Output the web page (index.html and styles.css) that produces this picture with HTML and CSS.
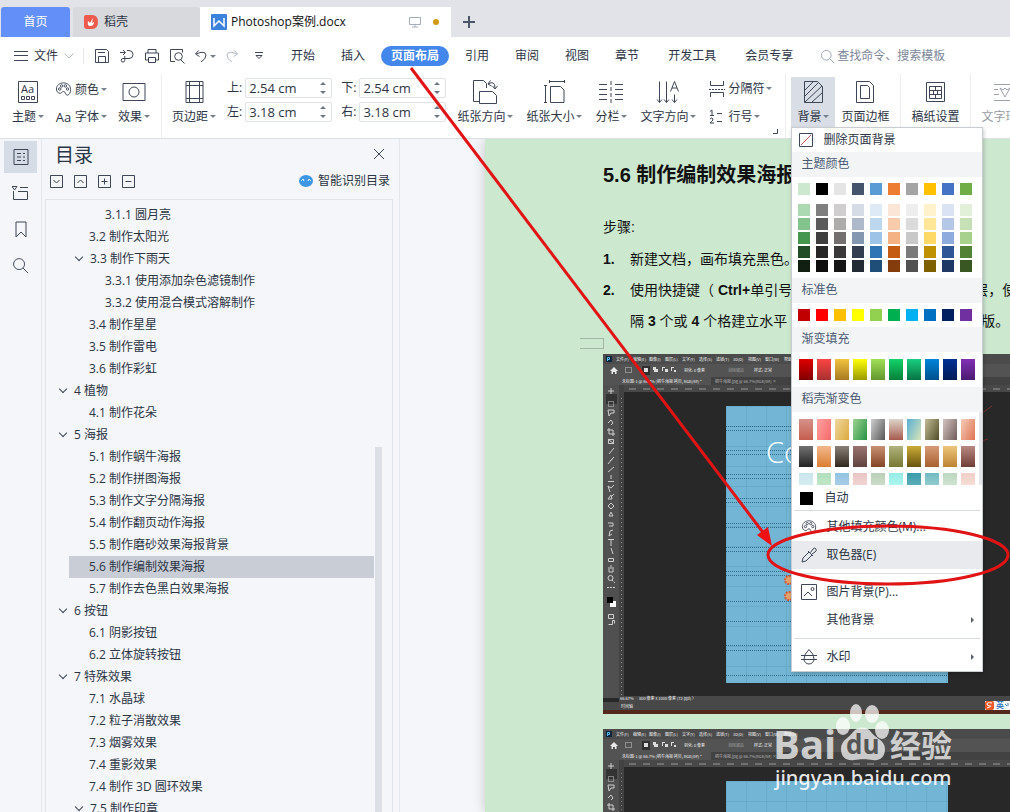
FILE: index.html
```html
<!DOCTYPE html>
<html lang="zh-CN">
<head>
<meta charset="utf-8">
<title>Photoshop案例.docx</title>
<link rel="stylesheet" href="styles.css">
</head>
<body>
<svg class="defs" aria-hidden="true">
  <symbol id="palette" viewBox="0 0 18 18"><path d="M9 2C4.500 2 1.500 5 1.500 8.500c0 3 2 4.500 4 4.500 2 0 1.500-2 3.500-2 2.500 0 1.500 4 4 4 2 0 3.500-2.500 3.500-6C16.500 5 13.500 2 9 2z"/><circle cx="5" cy="8.500" r="1.300"/><circle cx="7" cy="5.200" r="1.300"/><circle cx="11" cy="5.200" r="1.300"/><circle cx="13.300" cy="8.500" r="1.300"/></symbol>
  <symbol id="lens" viewBox="0 0 18 18"><circle cx="7.500" cy="7.500" r="5.800"/><path d="M11.700 11.700L17 17"/></symbol>
  <symbol id="pstools" viewBox="0 0 16 240">
    <g fill="none" stroke="#cfcfcf">
    <path d="M8 2v6M5 5h6"/><path d="M5.500 15.500h5v5h-5z" stroke-dasharray="1 1"/><path d="M5 24h6v3H8l-2 3zM5 37l3-3 2 3-2 2M6 42v6h6M4 44h6v6M5.500 53.500h5v4h-5zM5 53l6 5M11 62l-5 6M11 71l-4 4M10 72l-5 6M11 81l-6 5M8 89v4M5 95.500h6M11 99l-3 3-3-2 2 6M11 108l-3 3M8 109l-3 4h4zM5 120l3-3 3 3-3 3zM8 126l-2 4h4zM5 137h5v3H6M10 144l-3 1-1 5 3-2M5 153.500h6M8 153v7M8 162l2 6M5.500 172.500h5v3h-5zM6 181v5h4v-5M8 179v4"/><circle cx="7.500" cy="192" r="2.500"/><path d="M9 194l3 3M4 201.500h8" stroke-dasharray="2 1"/>
    <path d="M5.500 228.500h5v4h-5zM5.500 238.500h4v-4h2v3"/></g>
    <path d="M7 215h6v6H7z" fill="#fff"/><path d="M4 211h6v6H4z" fill="#000"/>
  </symbol>
</svg>

<div class="app">
  <header class="tabs">
    <button class="tab home">首页</button>
    <button class="tab docer"><svg width="14" height="14" viewBox="0 0 14 14"><path d="M2 0h6q6 0 6 7t-6 7H3q-3 0-3-3V2q0-2 2-2z" fill="#ed5b4d"/><path d="M4 6q-1 5 2 5 4 0 4-4l-2 1 1-5-3 5z" fill="#fff"/></svg>稻壳</button>
    <button class="tab doc"><svg width="16" height="16" viewBox="0 0 16 16"><rect width="16" height="16" rx="1" fill="#3b82dc"/><path d="M3 4v8l5-5 5 5V4" fill="none" stroke="#fff" stroke-width="1.500"/></svg><span>Photoshop案例.docx</span>
      <svg class="screen" width="12" height="12" viewBox="0 0 12 12"><path d="M.5 1.500h11v7H.5zM6 8.500v2M3 11h6" fill="none" stroke="#a3acb9"/></svg><i class="dot"></i></button>
    <button class="add" aria-label="新建"><svg width="12" height="12" viewBox="0 0 12 12"><path d="M6 0v12M0 6h12" stroke="#4b5668" stroke-width="2"/></svg></button>
  </header>

  <nav class="menubar">
    <button class="file"><svg class="ic" width="14" height="12" viewBox="0 0 14 12"><path d="M0 1.500h14M0 5.500h14M0 10.500h14"/></svg>文件<svg class="ic pale" width="10" height="6" viewBox="0 0 10 6"><path d="M.5.500L5 5l4.500-4.500"/></svg></button>
    <div class="quick">
      <button aria-label="保存"><svg class="ic" width="16" height="16" viewBox="0 0 16 16"><path d="M1.500 14.500v-13h11l2 2v11zM4.500 14V8.500h7V14M4 4.500h7"/></svg></button>
      <button aria-label="输出"><svg class="ic" width="16" height="16" viewBox="0 0 16 16"><path d="M1 4.500h5M4 2l2.500 2.500L4 7M8 2.500h2a4 4 0 0 1 0 8H4a1.800 1.800 0 1 0 1.800 1.800V8"/></svg></button>
      <button aria-label="打印"><svg class="ic" width="16" height="16" viewBox="0 0 16 16"><path d="M4 5V1.500h8V5M4 12H1.500V5h13v7H12M4.500 9.500h7v5h-7z"/></svg></button>
      <button aria-label="预览"><svg class="ic" width="16" height="16" viewBox="0 0 16 16"><path d="M6 13.500H1.500v-12h12v3M12 12l3.500 3.500"/><circle cx="9.500" cy="8.500" r="3.800"/></svg></button>
      <button aria-label="撤销" class="caret"><svg class="ic" width="14" height="14" viewBox="0 0 14 14"><path d="M4.500 1.500L1.500 5l4 2.500M2 5q9-4 10 1 0 4-5 7"/></svg></button>
      <button aria-label="重做"><svg class="ic pale" width="14" height="14" viewBox="0 0 14 14"><path d="M9.500 1.500L12.500 5l-4 2.500M12 5Q3 1 2 6q0 4 5 7"/></svg></button>
      <button aria-label="更多"><svg class="ic" width="10" height="8" viewBox="0 0 10 8"><path d="M1 .5h8M2 3.500l3 3 3-3z"/></svg></button>
    </div>
    <div class="menus"><a href="#">开始</a><a href="#">插入</a><a href="#" class="current">页面布局</a><a href="#">引用</a><a href="#">审阅</a><a href="#">视图</a><a href="#">章节</a><a href="#" class="wide">开发工具</a><a href="#" class="wide">会员专享</a></div>
    <label class="search"><svg class="ic" width="15" height="15"><use href="#lens"/></svg><input type="text" placeholder="查找命令、搜索模板" aria-label="查找命令"></label>
  </nav>

  <section class="ribbon">
    <div class="group first">
      <button class="tool"><svg class="ic" width="20" height="22" viewBox="0 0 20 22"><path d="M.5.500h19v21H.5zM3.500 15.500h3v3h-3zM8.500 15.500h3v3h-3zM13.500 15.500h3v3h-3z"/><text class="aa" x="3" y="12">Aa</text></svg><span class="caret">主题</span></button>
      <div class="pair"><button class="row"><svg class="ic" width="17" height="17"><use href="#palette"/></svg><span class="caret">颜色</span></button><button class="row"><b class="aa-label">Aa</b><span class="caret">字体</span></button></div>
      <button class="tool"><svg class="ic" width="24" height="20" viewBox="0 0 24 20"><path d="M1 1.500h22v17H1z"/><circle cx="12" cy="10" r="5"/></svg><span class="caret">效果</span></button>
    </div>
    <div class="group layout">
      <button class="tool"><svg class="ic" width="19" height="22" viewBox="0 0 19 22"><path d="M1 .5h17v21H1zM4.500 0v22M14.500 0v22M1 4.500h17M1 17.500h17"/></svg><span class="caret">页边距</span></button>
      <div class="margins">
        <label>上:<span class="spin"><input type="text" value="2.54 cm"><i></i></span></label><label>下:<span class="spin"><input type="text" value="2.54 cm"><i></i></span></label>
        <label>左:<span class="spin"><input type="text" value="3.18 cm"><i></i></span></label><label>右:<span class="spin"><input type="text" value="3.18 cm"><i></i></span></label>
      </div>
      <div class="page-tools">
        <button class="tool"><svg class="ic" width="26" height="24" viewBox="0 0 26 24"><path d="M7 21.500H1.500V.500h10l3 3V8M7.500 11.500h13l4 4v8h-17zM16 4q7-4 7 4M18.500.500L16 4l3.500 2M20.500 6L23 9l2.500-3"/></svg><span class="caret">纸张方向</span></button>
        <button class="tool"><svg class="ic" width="21" height="24" viewBox="0 0 21 24"><path d="M5 1.500h15M5.500 0v3M20.500 0v3M1.500 5v18M0 5.500h3M0 22.500h3M6.500 6.500h10l3.500 3.500v12.500H6.500z"/></svg><span class="caret">纸张大小</span></button>
        <button class="tool"><svg class="ic" width="24" height="22" viewBox="0 0 24 22"><path d="M0 3.500h8M0 8.500h8M0 13.500h8M0 18.500h8M16 3.500h8M16 8.500h8M16 13.500h8M16 18.500h8"/><path d="M12 0v22" stroke-dasharray="4 2"/></svg><span class="caret">分栏</span></button>
        <button class="tool"><svg class="ic" width="24" height="23" viewBox="0 0 24 23"><path d="M3.500 1v21M1 19l2.500 3L6 19M10.500 1v21M8 19l2.500 3 2.500-3M18.500 14v8M16 19l2.500 3 2.500-3M14.500 11l4-10 4 10M16 7.500h5"/></svg><span class="caret">文字方向</span></button>
        <div class="pair"><button class="row"><svg class="ic" width="16" height="16" viewBox="0 0 16 16"><path d="M1.500 0v4.500h13V0M1.500 16v-4.500h13V16"/><path d="M0 8.500h16" stroke-dasharray="2 1"/></svg><span class="caret">分隔符</span></button><button class="row"><svg class="ic" width="16" height="16" viewBox="0 0 16 16"><path d="M1 2.500L3 1v5M1 6.500h4M8 4.500h5M8 12.500h5M1 10q2-2 3 0 0 2-3 4h4"/></svg><span class="caret">行号</span></button></div>
      </div>
      <button class="launcher" aria-label="页面设置"><svg class="ic" width="5" height="5" viewBox="0 0 5 5"><path d="M4.500 0v4.500H0"/></svg></button>
    </div>
    <div class="group background">
      <div class="anchor">
        <button class="tool active"><svg class="ic" width="19" height="22" viewBox="0 0 19 22"><path d="M.5.500h13l5 5v16H.5zM1 9l8-8M1 15L14 2M1 21L18 5M8 21l10-9"/></svg><span class="caret">背景</span></button>
        <div class="popup">
          <button class="item clear"><svg width="14" height="14" viewBox="0 0 14 14"><path d="M.5.500h13v13H.5z" fill="#fff" stroke="#3d4757"/><path d="M2 12L12 2" stroke="#d05050"/></svg>删除页面背景</button>
          <h3>主题颜色</h3><div class="swatches base" data-set="theme"></div><div class="swatches shades" data-set="shades"></div>
          <h3>标准色</h3><div class="swatches standard" data-set="standard"></div>
          <h3>渐变填充</h3><div class="swatches grad" data-set="gradient"></div>
          <h3>稻壳渐变色</h3><div class="docer-grads"><div class="swatches grad" data-set="docer"></div></div>
          <button class="item auto"><i class="black"></i>自动</button>
          <hr>
          <button class="item"><svg class="ic" width="18" height="18"><use href="#palette"/></svg>其他填充颜色(M)...</button>
          <button class="item hover"><svg class="ic" width="16" height="16" viewBox="0 0 16 16"><path d="M1 15l1-4 6-6 3 3-6 6zM7 4l5 5M9.500 5.500L12 2q2-2 3 0t-1 3l-3 2"/></svg>取色器(E)</button>
          <hr>
          <button class="item"><svg class="ic" width="16" height="16" viewBox="0 0 16 16"><path d="M.5.500h15v15H.5zM3 12l4-4 4 4"/><circle cx="11.500" cy="5" r="1.500"/></svg>图片背景(P)...</button>
          <button class="item sub"><i class="blank"></i>其他背景</button>
          <hr>
          <button class="item sub"><svg class="ic" width="16" height="16" viewBox="0 0 16 16"><path d="M0 6.500h16M0 10.500h16M8 .5Q3 5 3 10a5 5 0 0 0 10 0Q13 5 8 .5z"/></svg>水印</button>
        </div>
      </div>
      <button class="tool"><svg class="ic" width="18" height="22" viewBox="0 0 18 22"><path d="M.5.500h13l4 4v17H.5zM4.500 4.500h7l2 2v11h-9z"/></svg><span>页面边框</span></button>
    </div>
    <div class="group"><button class="tool"><svg class="ic" width="19" height="22" viewBox="0 0 19 22"><path d="M.5 1.500h18v19H.5zM3.500 5.500h12v12h-12zM3.500 9.500h12M3.500 13.500h12M9.500 5.500v4M7.500 9.500v4M11.500 9.500v4M9.500 13.500v4"/></svg><span>稿纸设置</span></button></div>
    <div class="group"><button class="tool disabled"><svg class="ic" width="22" height="20" viewBox="0 0 22 20"><path d="M0 2.500h22M0 7.500h4M0 12.500h5M0 18.500h22M6 6l5 9 5-9-3 2-2-2-2 2z"/></svg><span>文字环绕</span></button></div>
  </section>

  <main class="workspace">
    <aside class="rail">
      <button class="on" aria-label="目录"><svg class="ic" width="16" height="16" viewBox="0 0 16 16"><path d="M1 .5h14v15H1zM4 4.500h4M4 8h4M4 11.500h4M10 4.500h2M10 8h2M10 11.500h2"/></svg></button>
      <button aria-label="章节"><svg class="ic" width="17" height="16" viewBox="0 0 17 16"><path d="M0 1.500h5L2.500 5zM8 2.500h8M1.500 6v8.500h14v-8H6"/></svg></button>
      <button aria-label="书签"><svg class="ic" width="12" height="17" viewBox="0 0 12 17"><path d="M1 1h10v15l-5-5-5 5z"/></svg></button>
      <button aria-label="查找"><svg class="ic" width="17" height="17"><use href="#lens"/></svg></button>
    </aside>
    <aside class="outline">
      <div class="title"><h2>目录</h2><button aria-label="关闭"><svg class="ic" width="10" height="10" viewBox="0 0 10 10"><path d="M0 0l10 10M10 0L0 10"/></svg></button></div>
      <div class="actions">
        <button aria-label="展开"><svg class="ic" width="13" height="13" viewBox="0 0 13 13"><path d="M.5.500h12v12H.5zM3.500 5l3 3 3-3"/></svg></button>
        <button aria-label="收起"><svg class="ic" width="13" height="13" viewBox="0 0 13 13"><path d="M.5.500h12v12H.5zM3.500 8l3-3 3 3"/></svg></button>
        <button aria-label="添加"><svg class="ic" width="13" height="13" viewBox="0 0 13 13"><path d="M.5.500h12v12H.5zM3.500 6.500h6M6.500 3.500v6"/></svg></button>
        <button aria-label="减少"><svg class="ic" width="13" height="13" viewBox="0 0 13 13"><path d="M.5.500h12v12H.5zM3.500 6.500h6"/></svg></button>
        <button class="smart"><svg width="14" height="12" viewBox="0 0 14 12"><ellipse cx="7" cy="6" rx="7" ry="6" fill="#3f96e3"/><path d="M2 6l2-2 1 2M9 6l1-2 2 2" fill="none" stroke="#fff"/></svg>智能识别目录</button>
      </div>
      <div class="tree-box">
        <ul class="tree">
          <li class="l3">3.1.1 圆月亮</li><li class="l2">3.2 制作太阳光</li><li class="l2 open">3.3 制作下雨天</li><li class="l3">3.3.1 使用添加杂色滤镜制作</li><li class="l3">3.3.2 使用混合模式溶解制作</li><li class="l2">3.4 制作星星</li><li class="l2">3.5 制作雷电</li><li class="l2">3.6 制作彩虹</li><li class="l1 open">4 植物</li><li class="l2">4.1 制作花朵</li><li class="l1 open">5 海报</li><li class="l2">5.1 制作蜗牛海报</li><li class="l2">5.2 制作拼图海报</li><li class="l2">5.3 制作文字分隔海报</li><li class="l2">5.4 制作翻页动作海报</li><li class="l2">5.5 制作磨砂效果海报背景</li><li class="l2 selected">5.6 制作编制效果海报</li><li class="l2">5.7 制作去色黑白效果海报</li><li class="l1 open">6 按钮</li><li class="l2">6.1 阴影按钮</li><li class="l2">6.2 立体旋转按钮</li><li class="l1 open">7 特殊效果</li><li class="l2">7.1 水晶球</li><li class="l2">7.2 粒子消散效果</li><li class="l2">7.3 烟雾效果</li><li class="l2">7.4 重影效果</li><li class="l2">7.4 制作 3D 圆环效果</li><li class="l2 open">7.5 制作印章</li>
        </ul>
        <div class="thumb"></div>
      </div>
    </aside>
    <section class="canvas">
      <article class="page">
        <h1>5.6 制作编制效果海报</h1>
        <p class="steps">步骤:</p>
        <ol>
          <li>新建文档，画布填充黑色。</li>
          <li>使用快捷键（ <b>Ctrl+</b>单引号<span class="covered"></span>层，使<br>隔 <b>3</b> 个或 <b>4</b> 个格建立水平<span class="covered second"></span>版。</li>
        </ol>
        <div class="mark"></div>
        <svg class="shot" width="407" height="360" viewBox="0 0 407 360">
          <defs><pattern id="gridp" width="20" height="20" patternUnits="userSpaceOnUse" x="123" y="52"><path d="M0 .5h20M.5 0v20" stroke="#62a3c2" stroke-width=".6"/></pattern></defs>
          <path d="M0 0h407v360H0z" fill="#282828"/>
          <g id="psbar">
            <path d="M0 0h407v10H0z" fill="#4b4b4b"/><path d="M0 10h407v13H0z" fill="#535353"/><path d="M0 23h407v8H0z" fill="#424242"/><path d="M0 23h108v8H0z" fill="#535353"/><path d="M0 31h407v7H0z" fill="#484848"/>
            <path d="M0 31h16v59H0z" fill="#505050"/><path d="M16 31h5v59h-5z" fill="#424242"/>
            <rect x="3" y="2" width="6" height="6" fill="#06263b"/><path d="M4.500 7V3.500h2v2h-2" fill="none" stroke="#59b8ee"/>
            <g class="ps-text"><text x="13" y="7">文件(F)</text><text x="30" y="7">编辑(E)</text><text x="46" y="7">图像(I)</text><text x="62" y="7">图层(L)</text><text x="79" y="7">文字(Y)</text><text x="96" y="7">选择(S)</text><text x="113" y="7">滤镜(T)</text><text x="130" y="7">3D(D)</text><text x="145" y="7">视图(V)</text><text x="162" y="7">窗口(W)</text><text x="181" y="7">帮助(H)</text>
            <text x="81" y="18">羽化: 0 像素</text><text x="125" y="18" opacity=".45">消除锯齿</text><text x="151" y="18">样式: 正常</text>
            <text x="19" y="29">未标题-1 @ 66.7% (蜗牛海报 拷贝, RGB/8#) *</text><text x="112" y="29" opacity=".6">蜗牛海报.jpg @ 66.7%(RGB/8#) ×</text></g>
            <path d="M7 17l4-4 4 4h-1.500v3H12v-2h-2v2H8.500v-3z" fill="#e8e8e8"/>
            <path d="M22.500 13.500h6v5h-6z" fill="none" stroke="#ccc" stroke-dasharray="1 1"/>
            <rect x="39" y="12" width="8" height="9" fill="#303030"/><path d="M41 14h4v4h-4zM50 13h3v2h2v3h-4v-2h-1zM59 13h3v1h-2v3h-1zM62 15h3v3h-3zM68 13h3v1h-2v3h-1zM71 16h2v2h-2z" fill="#ddd"/>
            <path d="M26 35h381" stroke="#707070" stroke-width="2" stroke-dasharray="7 7"/>
            <path d="M18.500 44v46" stroke="#777" stroke-dasharray="1 3"/>
            <rect x="3" y="40" width="11" height="10" fill="#333"/>
          </g>
          <path d="M0 38h16v306H0z" fill="#505050"/><path d="M16 38h5v306h-5z" fill="#424242"/><path d="M18.500 44v300" stroke="#888" stroke-dasharray="1 3"/><rect x="3" y="40" width="11" height="10" fill="#333"/><use href="#pstools" y="32" width="16" height="240"/>
          <path d="M123 52h222v277H123z" fill="#72b5d4"/><path d="M123 52h222v277H123z" fill="url(#gridp)"/>
          <path d="M123 72.500h222M123 76.500h222M123 96.500h222M123 100.500h222M123 120.500h222M123 124.500h222M123 144.500h222M123 148.500h222M123 169.500h222M123 173.500h222M123 193.500h222M123 197.500h222M123 217.500h222M123 221.500h222M123 247.500h222M123 267.500h222M123 291.500h222M123 296.500h222M123 321.500h222" stroke="#336a86" stroke-dasharray="1 1"/>
          <text class="art" x="163" y="109">Co</text>
          <g fill="#e2a46c" stroke="#d65a3c" stroke-width="2" stroke-dasharray="2 1"><circle cx="186" cy="226" r="4"/><circle cx="186" cy="242" r="4"/></g>
          <path d="M375 62l14-10M375 88l10-3" stroke="#7b2e2e"/>
          <path d="M16 342h391v6H16zM0 348h407v8H0z" fill="#484848"/><path d="M0 356h407v4H0z" fill="#54291b"/>
          <g class="ps-text"><text x="17" y="346">66.67%</text><text x="36" y="346">800 像素 x 1000 像素 (72 ppi)   〉</text><text x="18" y="354">时间轴</text></g>
          <path d="M382 347h25v9h-25z" fill="#fff"/><rect x="382" y="347" width="9" height="9" rx="2" fill="#ef5a28"/><path d="M389 349q-5-1-5 1t3 2-3 2" stroke="#fff" fill="none"/><text class="ime" x="393" y="354">英</text><path d="M402 350l2 2M405 349v3" stroke="#357abf"/>
        </svg>
        <svg class="shot" width="407" height="360" viewBox="0 0 407 360"><path d="M0 0h407v360H0z" fill="#282828"/><use href="#psbar"/><use href="#pstools" y="32" width="16" height="240"/><path d="M123 52h222v277H123z" fill="#72b5d4"/><path d="M123 52h222v277H123z" fill="url(#gridp)"/></svg>
      </article>
    </section>
  </main>

  <svg class="overlay" width="1010" height="812" viewBox="0 0 1010 812" aria-hidden="true">
    <g class="brand"><text class="bai" x="773" y="759">Bai</text><path d="M841 749c0-9 8-11 12-17 5-6 14-6 18 0 4 6 14 8 14 17 0 9-6 12-12 11-7-1-12-1-19 0-7 1-13-2-13-11z"/><ellipse cx="843" cy="726" rx="7" ry="9"/><ellipse cx="856" cy="713" rx="6" ry="9"/><ellipse cx="872" cy="714" rx="7" ry="9"/><ellipse cx="882" cy="730" rx="7" ry="9"/><text class="du" x="846" y="754">du</text><text class="jy" x="890" y="757">经验</text><text class="url" x="775" y="785">jingyan.baidu.com</text></g>
    <g fill="none" stroke="#e01414" stroke-width="3"><path d="M411 68l354 467"/><ellipse cx="888" cy="555" rx="120" ry="29"/></g><path d="M772 546l-15-11 11-8z" fill="#f01010"/>
  </svg>
</div>
<script src="app.js"></script>
</body>
</html>
```
FILE: styles.css
```css
* { box-sizing: border-box; }
body { margin: 0; background: #fff; color: #2c3544; font: 12px/16px "Open Sans", "Noto Sans CJK SC", sans-serif; }
button { border: 0; padding: 0; background: none; color: inherit; font: inherit; white-space: nowrap; }
a { color: inherit; text-decoration: none; }
svg { flex: none; }
.defs { position: absolute; width: 0; height: 0; }
.ic { fill: none; stroke: #3d4757; }
.pale { stroke: #b4bac4; }
.app { position: relative; display: flex; flex-direction: column; height: 100vh; overflow: hidden; }

.tabs { display: flex; flex: none; height: 37px; padding: 7px 1px 0; background: #e2e3e8; }
.tab { display: flex; align-items: center; gap: 6px; }
.home { justify-content: center; width: 69px; background: #6290f8; color: #fff; border-radius: 3px 3px 0 0; }
.docer { width: 127px; margin-left: 3px; padding-left: 11px; background: #d8d9dc; border-radius: 3px 3px 0 0; }
.doc { width: 251px; padding-left: 11px; gap: 4px; background: #fff; color: #111; }
.screen { margin-left: auto; }
.dot { width: 6px; height: 6px; margin: 0 12px 0 8px; border-radius: 50%; background: #d19a10; }
.add { display: flex; align-items: center; padding: 0 12px; }

.menubar { display: flex; flex: none; align-items: center; height: 37px; padding: 1px 0 0 14px; }
.file { display: flex; align-items: center; gap: 6px; }
.quick { display: flex; align-items: center; gap: 9px; margin-left: 9px; padding-left: 10px; border-left: 1px solid #e6e8eb; }
.quick button { display: flex; align-items: center; }
.quick button:last-child { margin-left: 6px; }
.menus { display: flex; gap: 26px; margin-left: 10px; padding-left: 17px; white-space: nowrap; }
.current { margin: -2px -10px; padding: 2px 10px; border-radius: 10px; background: #4387ec; color: #fff; font-weight: bold; }
.wide { margin-left: 3px; }
.search { display: flex; align-items: center; gap: 2px; margin-left: 27px; }
.search .ic { stroke: #8b97a8; }
.search input { width: 130px; padding: 0; border: 0; background: none; font: inherit; }
.search input::placeholder { color: #7b8697; opacity: 1; }

.caret::after { content: ""; display: inline-block; margin-left: 2px; vertical-align: 3px; border: 3px solid transparent; border-top-color: #77808d; border-bottom: 0; }
.ribbon { display: flex; flex: none; height: 65px; border-bottom: 1px solid #dcdfe3; }
.group { display: flex; gap: 11px; padding: 3px 11px 0 10px; border-right: 1px solid #eceef0; flex: none; }
.first { padding-left: 12px; }
.layout { padding-right: 7px; }
.tool { display: flex; flex-direction: column; align-items: center; justify-content: space-between; height: 50px; padding: 3px 0 2px; }
.tool .ic { height: 24px; }
.tool.disabled { opacity: .5; }
.pair { display: flex; flex-direction: column; justify-content: space-between; height: 50px; padding: 4px 0 2px; }
.row { display: flex; align-items: center; gap: 3px; }
.aa { font-size: 11px; fill: #2c3544; stroke: none; }
.aa-label { width: 17px; font-size: 13px; font-weight: normal; }
.margins { display: grid; grid-template-columns: auto auto; gap: 4px 9px; align-content: start; padding-top: 1px; }
.margins label { display: flex; align-items: center; gap: 3px; white-space: nowrap; }
.spin { display: flex; align-items: center; width: 87px; height: 20px; padding-right: 5px; border: 1px solid #dfe2e6; border-radius: 2px; background: #fff; }
.spin input { flex: 1; min-width: 0; padding: 0 3px; border: 0; background: none; color: inherit; font: 13px/16px "Open Sans", sans-serif; }
.spin i { display: flex; flex-direction: column; gap: 6px; }
.spin i::before, .spin i::after { content: ""; border: 3px solid transparent; }
.spin i::before { border-top: 0; border-bottom-color: #6d7683; }
.spin i::after { border-bottom: 0; border-top-color: #6d7683; }
.page-tools { display: flex; gap: 13px; }
.launcher { align-self: flex-end; margin: 0 0 4px -10px; line-height: 5px; }
.launcher svg { display: block; }
.background { gap: 6px; padding-left: 5px; }
.anchor { position: relative; z-index: 3; }
.active { width: 44px; background: #d9dde5; }

.popup { position: absolute; top: 50px; left: 0; width: 192px; background: #fff; border: 1px solid #c9ccd0; box-shadow: 1px 2px 4px #0003; }
.item { display: flex; align-items: center; gap: 9px; width: 100%; height: 28px; padding-left: 9px; text-align: left; }
.item .ic { width: 16px; }
.item.clear { height: 24px; padding-left: 7px; gap: 10px; }
.item.auto { height: 24px; gap: 11px; padding-left: 8px; }
.hover { background: #e8eaee; }
.sub::after { content: ""; margin-left: auto; margin-right: 8px; border: 3px solid transparent; border-left-color: #59616d; border-right: 0; }
.black { width: 13px; height: 13px; background: #000; }
.blank { width: 16px; }
.popup hr { height: 1px; margin: 4px 2px; border: 0; background: #d8dbdf; }
.auto + hr { margin-top: 0; margin-bottom: 2px; }
.popup h3 { margin: 0; padding: 4px 9px 5px; background: #f2f4f6; color: #4b5972; font-size: 12px; font-weight: normal; line-height: 16px; }
.swatches { display: grid; grid-template-columns: repeat(10, 12px); gap: 2px 6px; padding-left: 6px; }
.swatches button { height: 12px; }
.base { padding-top: 6px; padding-bottom: 9px; }
.shades { padding-bottom: 6px; }
.standard { padding-top: 6px; padding-bottom: 6px; }
.grad { grid-template-columns: repeat(10, 14px); gap: 6px 4px; padding: 7px 0 7px 7px; }
.grad button { height: 21px; }
.docer-grads { height: 73px; margin-bottom: 1px; overflow: hidden; border-right: 3px solid #e4e6e9; }

.workspace { display: flex; flex: 1; min-height: 0; background: #f5f6f9; }
.rail { display: flex; flex: none; flex-direction: column; gap: 4px; width: 42px; padding: 2px 4px; border-right: 1px solid #e3e6ea; }
.rail button { display: flex; align-items: center; justify-content: center; height: 32px; }
.rail .on { background: #d6dce6; }
.outline { display: flex; flex: none; flex-direction: column; width: 358px; padding: 2px 6px 0 3px; border-right: 1px solid #e3e6ea; }
.title { display: flex; align-items: center; justify-content: space-between; padding: 0 9px 0 10px; }
.title h2 { margin: 0; font-size: 19px; font-weight: normal; line-height: 28px; }
.actions { display: flex; align-items: center; gap: 11px; padding: 0 3px 6px 5px; height: 30px; }
.actions button { display: flex; align-items: center; }
.actions .smart { gap: 5px; margin-left: auto; }
.tree-box { position: relative; flex: 1; min-height: 0; overflow: hidden; border: 1px solid #e1e4e8; border-bottom: 0; }
.tree { margin: 0; padding: 4px 18px 0 23px; list-style: none; line-height: 22px; }
.l1 { padding-left: 4px; } .l2 { padding-left: 20px; } .l3 { padding-left: 36px; }
.open::before { content: ""; display: inline-block; width: 5px; height: 5px; margin: 0 8px 3px -13px; border: solid #3d4757; border-width: 0 1px 1px 0; transform: rotate(45deg); }
.selected { background: #c8cdd6; }
.thumb { position: absolute; top: 247px; right: 10px; bottom: 0; width: 7px; background: #dcdfe5; }

.canvas { flex: 1; min-width: 0; padding-left: 85px; overflow: hidden; }
.page { height: 100%; padding: 19px 0 0 118px; background: #cce8cf; color: #111; box-shadow: 0 0 12px #0003; font-size: 14px; line-height: 31px; white-space: nowrap; font-family: "Liberation Sans", "Noto Sans CJK SC", sans-serif; }
.page h1 { margin: 0; font-size: 20px; line-height: 34px; }
.page .steps { margin: 20px 0 0; }
.page ol { margin: 1px 0 0; padding-left: 27px; list-style: none; counter-reset: n; }
.page li { counter-increment: n; }
.page li::before { content: counter(n) "."; display: inline-block; width: 27px; margin-left: -27px; font-weight: bold; }
.covered { display: inline-block; width: 182px; }
.second { width: 194px; }
.mark { width: 24px; height: 11px; margin: 1px 0 5px -23px; border: 1px solid #a3b5a4; border-left: 0; }
.shot { display: block; margin-bottom: 15px; }
.ps-text text { font: 4px "Noto Sans CJK SC", sans-serif; fill: #eee; }
.ime { font: bold 8px "Noto Sans CJK SC", sans-serif; fill: #357abf; }
.art { font: 300 29px "Open Sans", sans-serif; fill: #fff; }

.overlay { position: absolute; top: 0; left: 0; z-index: 5; pointer-events: none; }
.brand { fill: #fff; fill-opacity: .72; }
.bai { font: bold 40px "Open Sans", sans-serif; }
.du { font: bold 26px "Open Sans", sans-serif; fill: #444; fill-opacity: .9; }
.jy { font: bold 31px "Noto Sans CJK SC", sans-serif; }
.url { font: 500 20px "Noto Sans", sans-serif; fill-opacity: .9; }
```
FILE: app.js
```js
const palettes = {
  theme: "#cce8cf #000 #e5e5e5 #44546a #5b9bd5 #ed7d31 #a5a5a5 #ffc000 #4472c4 #70ad47",
  shades: "#acd8b2 #7f7f7f #cfcdcd #d6dce5 #deebf7 #fbe5d6 #ededed #fff2cc #dae3f3 #e2f0d9 " +
    "#82c48b #595959 #aeabab #adb9ca #bdd7ee #f8cbad #dbdbdb #ffe699 #b4c7e7 #c5e0b4 " +
    "#45964f #3f3f3f #757070 #8497b0 #9dc3e6 #f4b183 #c9c9c9 #ffd966 #8faadc #a9d18e " +
    "#224b28 #262626 #3a3838 #333f50 #2e75b6 #c55a11 #7b7b7b #bf9000 #2f5597 #548235 " +
    "#111f13 #0d0d0d #171616 #222a35 #1f4e79 #843c0c #525252 #7f6000 #203864 #385723",
  standard: "#c00000 #f00 #ffc000 #ff0 #92d050 #00b050 #00b0f0 #0070c0 #002060 #7030a0",
  gradient: "#e00000-#800000 #fc4444-#a83030 #f2c240-#a67a20 #ffff10-#9a9a00 #a0e058-#63962d #12d268-#087f3b #18cf7f-#087343 #0084db-#00508b #003194-#001a55 #812fb5-#4b1b70",
  docer: "#d6918a-#c65e4e #ffa0a0-#f46a6a #f0d8a0-#dba93c #9fd391-#259343 #cfcfcf-#575757 #ded5ca-#a85b4e #58afd6-#d9e4b5 #c3bd96-#504d26 #d3c3c0-#705d59 #f5cbb8-#df7352 " +
    "#727272-#232323 #f2b98b-#db7d32 #8b8077-#30271f #9a7470-#61433f #c89070-#834327 #b0b37b-#777831 #cbab38-#68540e #d79b77-#a8602e #edc67d-#bd8331 #b98882-#713e37 " +
    "#c9e5ec-#dff3f5 #b2dfbd-#c9edce #91c3e1-#b9d6eb #e9c4c3-#f4dfdf #bad0b7-#d8e5d4 #94ede6-#bffaf4 #399ba8-#77bcc6 #72bac1-#a8d9dc #bcd8c0-#ddebdd #f0d0c8-#fae6de"
};
document.querySelectorAll("[data-set]").forEach(grid => {
  palettes[grid.dataset.set].split(" ").forEach((value, i) => {
    const swatch = document.createElement("button");
    const stops = value.split("-");
    const angle = grid.dataset.set === "docer" && i < 10 && i % 5 ? 115 : 180;
    swatch.style.background = stops[1] ? `linear-gradient(${angle}deg, ${stops[0]}, ${stops[1]})` : value;
    swatch.setAttribute("aria-label", value);
    grid.append(swatch);
  });
});
```
